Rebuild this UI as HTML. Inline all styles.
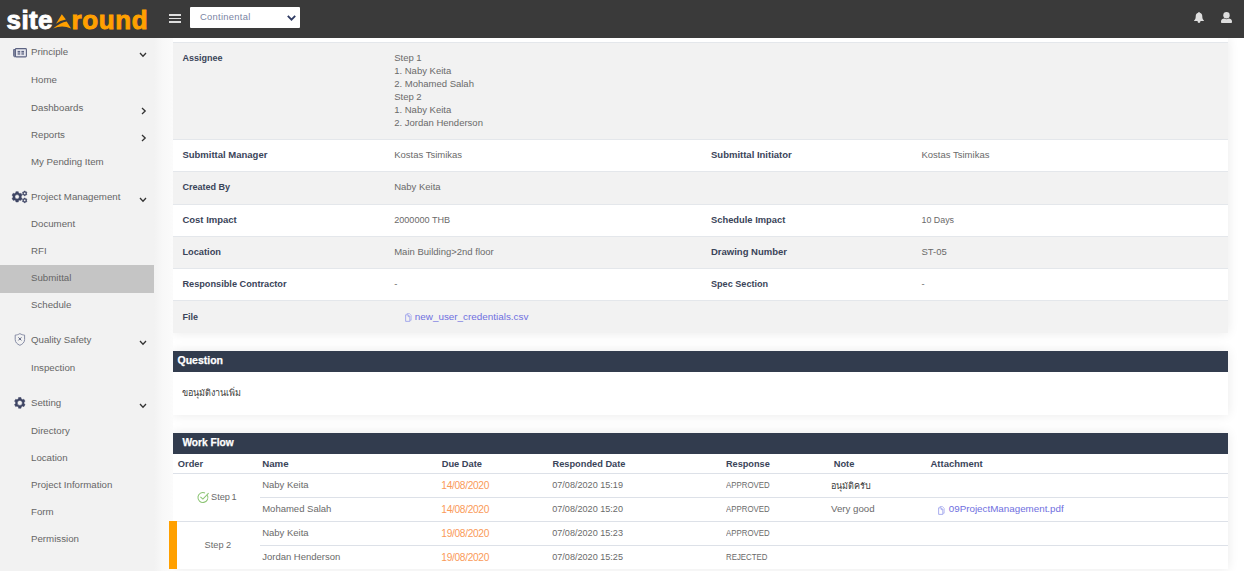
<!DOCTYPE html>
<html>
<head>
<meta charset="utf-8">
<title>sitearound</title>
<style>
*{box-sizing:border-box;margin:0;padding:0}
html,body{width:1244px;height:571px;overflow:hidden;background:#fff;font-family:"Liberation Sans",sans-serif;font-size:9.5px;color:#5c5c5c}
div,span{white-space:nowrap}
#hdr{position:absolute;left:0;top:0;width:1244px;height:38px;background:#3a3a3a;z-index:10}
#logo{position:absolute;left:6.6px;top:2.6px;height:34px;line-height:34px;font-size:26px;font-weight:bold;color:#fff;-webkit-text-stroke:0.9px #fff;letter-spacing:0.35px}
#logo2{position:absolute;left:71.6px;top:2.6px;height:34px;line-height:34px;font-size:26px;font-weight:bold;color:#ffa000;-webkit-text-stroke:0.9px #ffa000;letter-spacing:0.6px}
#burger{position:absolute;left:169px;top:14px;width:12px;height:9px}
#burger i{position:absolute;left:0;width:12px;height:1.5px;background:#dedede}
#sel{position:absolute;left:190px;top:7px;width:110px;height:21px;background:#fff;border-radius:1px}
#sel span{position:absolute;left:10px;top:-0.7px;line-height:21px;font-size:9.4px;letter-spacing:0.28px;color:#7a84a3}
#side{position:absolute;left:0;top:38px;width:154px;height:533px;background:#f2f2f2;}
.mi{position:absolute;left:31px;font-size:9.7px;color:#666;line-height:12px}
#selrow{position:absolute;left:0;top:227px;width:154px;height:28px;background:#c5c5c5}
#gap{position:absolute;left:154px;top:38px;width:19px;height:533px;background:linear-gradient(to right,#f2f2f2,#f8f8f8 45%,#fbfbfb 100%);z-index:2}
#card{position:absolute;left:173px;top:38px;width:1055px;height:295px;background:#fff;box-shadow:0 0 11px rgba(0,0,0,0.09)}
.row{position:absolute;left:0;width:1055px;border-top:1.3px solid #e4e7eb}
.row.g{background:#f2f2f2}
.lb{position:absolute;font-weight:bold;color:#3a4459;font-size:9.5px;line-height:12px}
.vl{position:absolute;color:#6a6a6a;font-size:9.5px;line-height:12px}
.lk{position:absolute;color:#6f6fe0;font-size:9.9px;line-height:12px}
.sec{position:absolute;left:173px;width:1055px;background:#323c4e}
.sec span{position:absolute;color:#fff;font-weight:bold;font-size:10.5px;line-height:12px;-webkit-text-stroke:0.25px #fff}
.wcard{position:absolute;left:173px;width:1055px;background:#fff;box-shadow:0 0 11px rgba(0,0,0,0.09)}
.hl{position:absolute;height:1px;background:#dde1e8}
.th{position:absolute;font-weight:bold;color:#3a4459;font-size:9.3px;line-height:12px}
.td{position:absolute;color:#6a6a6a;font-size:9.5px;line-height:12px}
.du{position:absolute;color:#fa9a58;font-size:9.6px;line-height:12px}
svg{position:absolute;overflow:visible}
</style>
</head>
<body>
<div id="hdr">
<div id="logo">site</div><div id="logo2">round</div>
<svg id="tri" style="left:48px;top:8px" width="30" height="25" viewBox="0 0 30 25"><path d="M13.8 6.3 L17.9 11.5 Q12 12.6 8 15.8 Z" fill="#ffa000"/><path d="M5.2 20.4 Q12.5 14.6 18.7 13.5 L23.1 20.4 Q14 16.6 5.2 20.4 Z" fill="#ffa000"/></svg>
<div id="burger"><i style="top:0"></i><i style="top:3.6px"></i><i style="top:7.2px"></i></div>
<div id="sel"><span>Continental</span>
<svg style="left:97px;top:8px" width="9" height="6" viewBox="0 0 9 6"><path d="M0.8 0.8 L4.5 4.7 L8.2 0.8" stroke="#2f3b63" stroke-width="1.8" fill="none"/></svg></div>
<svg style="left:1194px;top:12px" width="10" height="11" viewBox="0 0 10 11"><path d="M5 0 C5.5 0 5.8 0.3 5.8 0.8 C7.5 1.2 8.3 2.6 8.3 4.4 C8.3 6.6 9 7.4 9.8 8.2 C10 8.5 9.9 9 9.4 9 L0.6 9 C0.1 9 0 8.5 0.2 8.2 C1 7.4 1.7 6.6 1.7 4.4 C1.7 2.6 2.5 1.2 4.2 0.8 C4.2 0.3 4.5 0 5 0 Z M3.6 9 L6.4 9 L6.4 9.6 C6.4 10.4 5.8 11 5 11 C4.2 11 3.6 10.4 3.6 9.6 Z" fill="#dedede"/></svg>
<svg style="left:1221px;top:12px" width="11" height="11" viewBox="0 0 11 11"><circle cx="5.5" cy="3.2" r="3.2" fill="#dedede"/><path d="M0 9.6 C0 7.6 1.5 6.6 3.3 6.6 C4 7 4.7 7.2 5.5 7.2 C6.3 7.2 7 7 7.7 6.6 C9.5 6.6 11 7.6 11 9.6 L11 10 C11 10.6 10.5 11 10 11 L1 11 C0.5 11 0 10.6 0 10 Z" fill="#dedede"/></svg>
</div>
<div id="side">
<div id="selrow"></div>
<div class="mi" style="top:7.99px">Principle</div>
<div class="mi" style="top:35.79px">Home</div>
<div class="mi" style="top:63.79px">Dashboards</div>
<div class="mi" style="top:90.79px">Reports</div>
<div class="mi" style="top:117.59px">My Pending Item</div>
<div class="mi" style="top:152.59px">Project Management</div>
<div class="mi" style="top:180.09px">Document</div>
<div class="mi" style="top:207.39px">RFI</div>
<div class="mi" style="top:234.49px">Submittal</div>
<div class="mi" style="top:261.39px">Schedule</div>
<div class="mi" style="top:295.59px">Quality Safety</div>
<div class="mi" style="top:323.79px">Inspection</div>
<div class="mi" style="top:358.79px">Setting</div>
<div class="mi" style="top:386.79px">Directory</div>
<div class="mi" style="top:413.99px">Location</div>
<div class="mi" style="top:441.39px">Project Information</div>
<div class="mi" style="top:468.39px">Form</div>
<div class="mi" style="top:495.29px">Permission</div>
<svg style="left:139.0px;top:14.0px" width="8" height="6" viewBox="0 0 8 6"><path d="M1 1 L4 4.2 L7 1" stroke="#333" stroke-width="1.3" fill="none"/></svg>
<svg style="left:141.0px;top:68.5px" width="6" height="8" viewBox="0 0 6 8"><path d="M1 1 L4.2 4 L1 7" stroke="#333" stroke-width="1.3" fill="none"/></svg>
<svg style="left:141.0px;top:95.5px" width="6" height="8" viewBox="0 0 6 8"><path d="M1 1 L4.2 4 L1 7" stroke="#333" stroke-width="1.3" fill="none"/></svg>
<svg style="left:139.0px;top:158.5px" width="8" height="6" viewBox="0 0 8 6"><path d="M1 1 L4 4.2 L7 1" stroke="#333" stroke-width="1.3" fill="none"/></svg>
<svg style="left:139.0px;top:301.5px" width="8" height="6" viewBox="0 0 8 6"><path d="M1 1 L4 4.2 L7 1" stroke="#333" stroke-width="1.3" fill="none"/></svg>
<svg style="left:139.0px;top:365.0px" width="8" height="6" viewBox="0 0 8 6"><path d="M1 1 L4 4.2 L7 1" stroke="#333" stroke-width="1.3" fill="none"/></svg>
<svg style="left:13px;top:10px" width="14" height="10" viewBox="0 0 14 10"><path d="M2.4 1.5 L0.6 1.5 L0.6 7.8 C0.6 8.5 1.2 8.9 2.4 8.9 Z" fill="#8d92a8" stroke="#5c6382" stroke-width="0.9"/><rect x="2.4" y="0.6" width="11" height="8.3" rx="0.9" fill="#e6e7ee" stroke="#5c6382" stroke-width="1.1"/><rect x="4.6" y="2.9" width="2.6" height="1.7" fill="#5c6382"/><rect x="8.4" y="2.9" width="2.6" height="1.7" fill="#5c6382"/><rect x="4.6" y="5.3" width="2.6" height="1.3" fill="#5c6382"/><rect x="8.4" y="5.3" width="2.6" height="1.3" fill="#5c6382"/></svg>
<svg style="left:0;top:0" width="40" height="520" viewBox="0 38 40 520"><g fill="#3e4564" fill-rule="evenodd" stroke="#3e4564" stroke-width="0.5" stroke-linejoin="round"><path d="M15.80 192.81 L15.91 191.64 L18.29 191.64 L18.40 192.81 L19.91 193.68 L20.98 193.19 L22.17 195.25 L21.21 195.93 L21.21 197.67 L22.17 198.35 L20.98 200.41 L19.91 199.92 L18.40 200.79 L18.29 201.96 L15.91 201.96 L15.80 200.79 L14.29 199.92 L13.22 200.41 L12.03 198.35 L12.99 197.67 L12.99 195.93 L12.03 195.25 L13.22 193.19 L14.29 193.68 Z M14.90 196.80 a2.20 2.20 0 1 0 4.40 0 a2.20 2.20 0 1 0 -4.40 0 Z"/><path d="M24.11 191.65 L24.12 191.07 L25.28 191.07 L25.29 191.65 L25.92 192.01 L26.43 191.73 L27.01 192.74 L26.51 193.03 L26.51 193.77 L27.01 194.06 L26.43 195.07 L25.92 194.79 L25.29 195.15 L25.28 195.73 L24.12 195.73 L24.11 195.15 L23.48 194.79 L22.97 195.07 L22.39 194.06 L22.89 193.77 L22.89 193.03 L22.39 192.74 L22.97 191.73 L23.48 192.01 Z M23.55 193.40 a1.15 1.15 0 1 0 2.30 0 a1.15 1.15 0 1 0 -2.30 0 Z"/><path d="M24.11 198.65 L24.12 198.07 L25.28 198.07 L25.29 198.65 L25.92 199.01 L26.43 198.73 L27.01 199.74 L26.51 200.03 L26.51 200.77 L27.01 201.06 L26.43 202.07 L25.92 201.79 L25.29 202.15 L25.28 202.73 L24.12 202.73 L24.11 202.15 L23.48 201.79 L22.97 202.07 L22.39 201.06 L22.89 200.77 L22.89 200.03 L22.39 199.74 L22.97 198.73 L23.48 199.01 Z M23.55 200.40 a1.15 1.15 0 1 0 2.30 0 a1.15 1.15 0 1 0 -2.30 0 Z"/><path d="M18.47 398.81 L18.57 397.54 L21.03 397.54 L21.13 398.81 L22.68 399.70 L23.83 399.15 L25.06 401.29 L24.01 402.01 L24.01 403.79 L25.06 404.51 L23.83 406.65 L22.68 406.10 L21.13 406.99 L21.03 408.26 L18.57 408.26 L18.47 406.99 L16.92 406.10 L15.77 406.65 L14.54 404.51 L15.59 403.79 L15.59 402.01 L14.54 401.29 L15.77 399.15 L16.92 399.70 Z M17.30 402.90 a2.50 2.50 0 1 0 5.00 0 a2.50 2.50 0 1 0 -5.00 0 Z"/></g><path d="M19.9 333.6 C21.5 334.6 23 335 24.6 335.1 L24.6 339.5 C24.6 342.3 22.6 344.2 19.9 345.3 C17.2 344.2 15.2 342.3 15.2 339.5 L15.2 335.1 C16.8 335 18.3 334.6 19.9 333.6 Z" fill="none" stroke="#7f86a0" stroke-width="0.95"/><path d="M18.4 337.4 L21.4 340.4 M21.4 337.4 L18.4 340.4" stroke="#5d6482" stroke-width="1" fill="none"/></svg>
</div>
<div id="gap"></div>
<div id="card">
<div class="row g" style="top:4.0px;height:97.2px"></div>
<div class="row " style="top:101.2px;height:32.2px"></div>
<div class="row g" style="top:133.4px;height:32.3px"></div>
<div class="row " style="top:165.7px;height:32.3px"></div>
<div class="row g" style="top:198.0px;height:32.3px"></div>
<div class="row " style="top:230.3px;height:32.1px"></div>
<div class="row g" style="top:262.4px;height:32.6px"></div>
<div class="lb" style="left:9.4px;top:13.68px;font-size:9.00px;">Assignee</div>
<div class="vl" style="left:221.2px;top:13.61px;font-size:9.50px;">Step 1</div>
<div class="vl" style="left:221.2px;top:26.61px;font-size:9.50px;">1. Naby Keita</div>
<div class="vl" style="left:221.2px;top:39.61px;font-size:9.50px;">2. Mohamed Salah</div>
<div class="vl" style="left:221.2px;top:52.61px;font-size:9.50px;">Step 2</div>
<div class="vl" style="left:221.2px;top:65.61px;font-size:9.50px;">1. Naby Keita</div>
<div class="vl" style="left:221.2px;top:78.61px;font-size:9.50px;">2. Jordan Henderson</div>
<div class="lb" style="left:9.4px;top:111.11px;font-size:9.50px;">Submittal Manager</div>
<div class="vl" style="left:221.2px;top:111.11px;font-size:9.50px;">Kostas Tsimikas</div>
<div class="lb" style="left:538.0px;top:111.11px;font-size:9.50px;">Submittal Initiator</div>
<div class="vl" style="left:748.5px;top:111.11px;font-size:9.50px;">Kostas Tsimikas</div>
<div class="lb" style="left:9.4px;top:142.96px;font-size:9.05px;">Created By</div>
<div class="vl" style="left:221.2px;top:143.41px;font-size:9.50px;">Naby Keita</div>
<div class="lb" style="left:9.4px;top:175.71px;font-size:9.50px;">Cost Impact</div>
<div class="vl" style="left:221.2px;top:175.85px;font-size:9.10px;">2000000 THB</div>
<div class="lb" style="left:538.0px;top:175.76px;font-size:9.35px;">Schedule Impact</div>
<div class="vl" style="left:748.5px;top:175.92px;font-size:8.90px;">10 Days</div>
<div class="lb" style="left:9.4px;top:208.09px;font-size:9.25px;">Location</div>
<div class="vl" style="left:221.2px;top:208.01px;font-size:9.50px;">Main Building&gt;2nd floor</div>
<div class="lb" style="left:538.0px;top:208.01px;font-size:9.50px;">Drawing Number</div>
<div class="vl" style="left:748.5px;top:208.01px;font-size:9.50px;">ST-05</div>
<div class="lb" style="left:9.4px;top:240.41px;font-size:9.20px;">Responsible Contractor</div>
<div class="vl" style="left:221.2px;top:240.31px;font-size:9.50px;">-</div>
<div class="lb" style="left:538.0px;top:240.45px;font-size:9.10px;">Spec Section</div>
<div class="vl" style="left:748.5px;top:240.31px;font-size:9.50px;">-</div>
<div class="lb" style="left:9.4px;top:272.68px;font-size:9.00px;">File</div>
<div class="lk" style="left:241.8px;top:272.97px;font-size:9.90px;">new_user_credentials.csv</div>
</div>
<div class="wcard" style="top:351px;height:63.8px"></div>
<div class="sec" style="top:351px;height:21.2px"><span style="left:4.5px;top:3.46px">Question</span></div>
<div class="wcard" style="top:433.2px;height:135.8px"></div>
<div class="sec" style="top:433.2px;height:20.4px"><span style="left:9.4px;top:4.17px;font-size:10.2px">Work Flow</span></div>
<div class="th" style="left:177.8px;top:457.88px;font-size:9.30px;">Order</div>
<div class="th" style="left:262.2px;top:457.74px;font-size:9.70px;">Name</div>
<div class="th" style="left:441.7px;top:457.88px;font-size:9.30px;">Due Date</div>
<div class="th" style="left:552.5px;top:457.89px;font-size:9.25px;">Responded Date</div>
<div class="th" style="left:725.9px;top:457.91px;font-size:9.20px;">Response</div>
<div class="th" style="left:833.7px;top:457.88px;font-size:9.30px;">Note</div>
<div class="th" style="left:930.5px;top:457.81px;font-size:9.50px;">Attachment</div>
<div class="hl" style="left:173.0px;top:472.8px;width:1055.0px"></div>
<div class="hl" style="left:260.0px;top:497.0px;width:968.0px"></div>
<div class="hl" style="left:173.0px;top:521.0px;width:1055.0px"></div>
<div class="hl" style="left:260.0px;top:544.8px;width:968.0px"></div>
<div class="td" style="left:262.2px;top:478.51px;font-size:9.50px;">Naby Keita</div>
<div class="du" style="left:441.3px;top:479.67px;font-size:10.20px;letter-spacing:-0.33px">14/08/2020</div>
<div class="td" style="left:552.2px;top:478.65px;font-size:9.10px;">07/08/2020 15:19</div>
<div class="td" style="left:726.0px;top:478.98px;font-size:9.30px;transform:scaleX(0.845);transform-origin:0 0">APPROVED</div>
<div class="td" style="left:262.2px;top:502.71px;font-size:9.50px;">Mohamed Salah</div>
<div class="du" style="left:441.3px;top:503.87px;font-size:10.20px;letter-spacing:-0.33px">14/08/2020</div>
<div class="td" style="left:552.2px;top:502.85px;font-size:9.10px;">07/08/2020 15:20</div>
<div class="td" style="left:726.0px;top:503.18px;font-size:9.30px;transform:scaleX(0.845);transform-origin:0 0">APPROVED</div>
<div class="td" style="left:262.2px;top:526.51px;font-size:9.50px;">Naby Keita</div>
<div class="du" style="left:441.3px;top:527.67px;font-size:10.20px;letter-spacing:-0.33px">19/08/2020</div>
<div class="td" style="left:552.2px;top:526.65px;font-size:9.10px;">07/08/2020 15:23</div>
<div class="td" style="left:726.0px;top:526.98px;font-size:9.30px;transform:scaleX(0.845);transform-origin:0 0">APPROVED</div>
<div class="td" style="left:262.2px;top:550.51px;font-size:9.50px;">Jordan Henderson</div>
<div class="du" style="left:441.3px;top:551.67px;font-size:10.20px;letter-spacing:-0.33px">19/08/2020</div>
<div class="td" style="left:552.2px;top:550.65px;font-size:9.10px;">07/08/2020 15:25</div>
<div class="td" style="left:726.0px;top:550.98px;font-size:9.30px;transform:scaleX(0.845);transform-origin:0 0">REJECTED</div>
<div class="td" style="left:831.0px;top:503.24px;font-size:9.70px;">Very good</div>
<div class="lk" style="left:948.8px;top:503.20px;font-size:9.80px;">09ProjectManagement.pdf</div>
<div class="td" style="left:211.0px;top:491.41px;font-size:9.20px;word-spacing:-0.9px">Step 1</div>
<div class="td" style="left:204.6px;top:539.01px;font-size:9.20px;">Step 2</div>
<div style="z-index:3;position:absolute;left:169px;top:521px;width:7.7px;height:48px;background:#ffa000"></div>
<svg style="left:182.3px;top:396.0px" width="57" height="2" viewBox="0 0 57 2"><text x="0" y="0" font-size="9" fill="#3a3a3a" font-family="'Liberation Sans', sans-serif">ขอนุมัติงานเพิ่ม</text></svg>
<svg style="left:830.6px;top:489.0px" width="38" height="2" viewBox="0 0 38 2"><text x="0" y="0" font-size="9" fill="#3a3a3a" font-family="'Liberation Sans', sans-serif">อนุมัติครับ</text></svg>
<svg style="left:404.6px;top:312.9px" width="7.2" height="9" viewBox="0 0 8 10"><path d="M2.2 1.6 L2.2 0.6 L5 0.6 L6.9 2.6 L6.9 8 L5.6 8" fill="none" stroke="#a3a8ee" stroke-width="0.8"/><path d="M0.7 2 L3.6 2 L5.4 3.9 L5.4 9.3 L0.7 9.3 Z" fill="none" stroke="#9499ea" stroke-width="0.9"/><path d="M3.5 2.2 L3.5 4 L5.2 4" fill="none" stroke="#9499ea" stroke-width="0.8"/></svg>
<svg style="left:937.8px;top:505.6px" width="7.2" height="9" viewBox="0 0 8 10"><path d="M2.2 1.6 L2.2 0.6 L5 0.6 L6.9 2.6 L6.9 8 L5.6 8" fill="none" stroke="#a3a8ee" stroke-width="0.8"/><path d="M0.7 2 L3.6 2 L5.4 3.9 L5.4 9.3 L0.7 9.3 Z" fill="none" stroke="#9499ea" stroke-width="0.9"/><path d="M3.5 2.2 L3.5 4 L5.2 4" fill="none" stroke="#9499ea" stroke-width="0.8"/></svg>
<svg style="left:196px;top:490px" width="15" height="15" viewBox="0 0 15 15"><path d="M11.4 5.2 A5 5 0 1 1 9 2.9" fill="none" stroke="#8cc474" stroke-width="1.05"/><path d="M4.4 6.8 L6.9 9.1 L12.6 3.1" fill="none" stroke="#8cc474" stroke-width="1.05"/></svg>
</body>
</html>
